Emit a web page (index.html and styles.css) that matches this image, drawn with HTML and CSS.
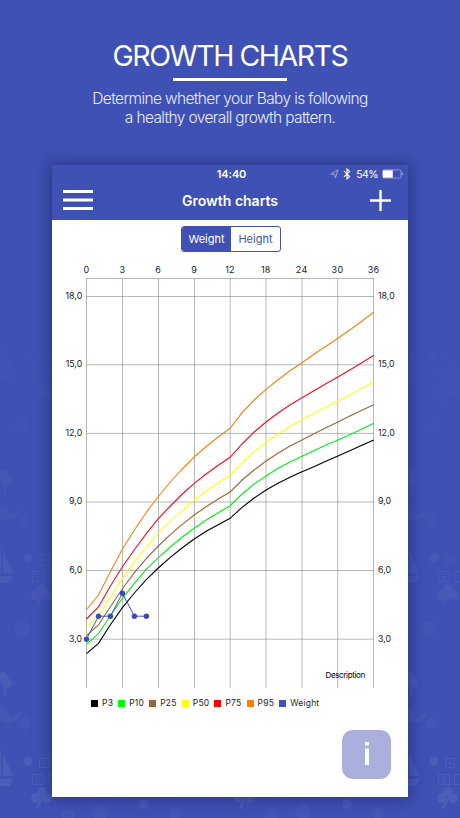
FILE: index.html
```html
<!DOCTYPE html>
<html lang="en">
<head>
<meta charset="utf-8">
<title>Growth charts</title>
<link rel="stylesheet" href="styles.css">
</head>
<body>
<svg class="backdrop" width="460" height="818" viewBox="0 0 460 818" aria-hidden="true">
  <defs>
    <pattern id="toys" width="203" height="203" y="545" patternUnits="userSpaceOnUse">
      <g fill="#fff">
        <path d="M0 3H1V28H0zM3 5 13 28H3zM0 31H13L10 38H0z"/>
        <circle cx="28" cy="13" r="4.500"/>
        <circle cx="42" cy="44" r="5"/><circle cx="36" cy="50" r="5"/><circle cx="47" cy="50" r="5"/><path d="M41 50l2 1-5 10-2-1z"/>
        <circle cx="3" cy="132" r="5"/><circle cx="7" cy="138" r="5"/><path d="M4 138h2v13H4z"/>
        <path d="M0 162q8 2 11 11 4-4 10-5-2 8-11 10-6 1-10-3z" opacity=".6"/>
        <circle cx="22" cy="84" r="8" opacity=".4"/><circle cx="25" cy="178" r="6" opacity=".4"/>
        <circle cx="144" cy="56" r="5" opacity=".8"/><circle cx="175" cy="66" r="6" opacity=".4"/><circle cx="100" cy="64" r="8" opacity=".4"/><circle cx="68" cy="68" r="7" opacity=".4"/>
      </g>
      <g fill="none" stroke="#fff">
        <rect x="39.500" y="10.500" width="9" height="9"/><rect x="32.500" y="26.500" width="11" height="10"/><rect x="48.500" y="26.500" width="11" height="10"/>
        <path d="M42 17l2-4 2 4M36 29h4M36 31.500h4M36 34h4"/>
      </g>
    </pattern>
    <linearGradient id="rise" x1="0" y1="0" x2="0" y2="1">
      <stop offset=".35" stop-color="#fff" stop-opacity="0"/><stop offset=".72" stop-color="#fff" stop-opacity=".05"/><stop offset="1" stop-color="#fff" stop-opacity=".075"/>
    </linearGradient>
    <mask id="fade"><rect width="460" height="818" fill="url(#rise)"/></mask>
  </defs>
  <rect width="460" height="818" fill="url(#toys)" mask="url(#fade)"/>
</svg>
<main class="page">
  <header class="intro">
    <h1 class="title">GROWTH CHARTS</h1>
    <div class="rule"></div>
    <p class="lead">Determine whether your Baby is following<br>a healthy overall growth pattern.</p>
  </header>
  <section class="phone">
    <div class="bar">
      <div class="status">
        <span></span>
        <span class="clock">14:40</span>
        <span class="indicators">
          <svg width="9" height="10" viewBox="0 0 9 10"><path d="M.8 5.100 8 1 5.300 8.800 4.500 5.300z" fill="none" stroke="#aeb7e2" stroke-width=".8"/></svg>
          <svg width="8" height="12" viewBox="0 0 8 12"><path d="M1 3.200 6.600 8.600 4 11V1l2.600 2.500L1 8.800" fill="none" stroke="#fff" stroke-width="1.100"/></svg>
          <span class="percent">54%</span>
          <svg width="22" height="10" viewBox="0 0 22 10"><rect x=".5" y=".9" width="18.500" height="8.200" rx="1.500" fill="none" stroke="#aeb7e2" stroke-width=".7"/><path d="M1 1.300h9.800v7.400H1z" fill="#fff"/><path d="M20 3.500q1.500 1.500 0 3z" fill="#fff"/></svg>
        </span>
      </div>
      <nav class="nav">
        <svg width="30" height="20" viewBox="0 0 30 20"><path d="M0 1.500h30M0 10h30M0 18.500h30" stroke="#fff" stroke-width="3"/></svg>
        <span class="nav-title">Growth charts</span>
        <svg class="add" width="21" height="21" viewBox="0 0 21 21"><path d="M0 10.500h21M10.500 0v21" stroke="#fff" stroke-width="2.400"/></svg>
      </nav>
    </div>
    <div class="tabs"><span class="tab active">Weight</span><span class="tab">Height</span></div>
    <svg class="chart" width="356" height="431" viewBox="52 260 356 431">
      <g class="grid">
        <path d="M86.500 278v410M122.500 278v410M158.500 278v410M194.500 278v410M230.200 278v410M266 278v410M302 278v410M337.700 278v410M373.500 278v410"/>
        <path d="M86 278.500h288M86 296.500h288M86 364.800h288M86 433.400h288M86 502h288M86 570.500h288M86 639.200h288"/>
      </g>
      <g class="months">
        <text x="86.500" y="273">0</text><text x="122.500" y="273">3</text><text x="158.300" y="273">6</text><text x="194.200" y="273">9</text><text x="230" y="273">12</text><text x="265.800" y="273">18</text><text x="301.700" y="273">24</text><text x="337.500" y="273">30</text><text x="373.500" y="273">36</text>
      </g>
      <g class="kilos left">
        <text x="82.200" y="298.600">18,0</text><text x="82.200" y="367.200">15,0</text><text x="82.200" y="435.800">12,0</text><text x="82.200" y="504.300">9,0</text><text x="82.200" y="572.800">6,0</text><text x="82.200" y="641.500">3,0</text>
      </g>
      <g class="kilos">
        <text x="378" y="298.600">18,0</text><text x="378" y="367.200">15,0</text><text x="378" y="435.800">12,0</text><text x="378" y="504.300">9,0</text><text x="378" y="572.800">6,0</text><text x="378" y="641.500">3,0</text>
      </g>
      <g class="curves" id="curves"></g>
      <g class="weight">
        <path d="M86.500 639.200 98.500 616.200H110.400L122.400 593.300 134.400 616.200H146.400"/>
        <circle cx="86.500" cy="639.200" r="2.700"/><circle cx="98.500" cy="616.200" r="2.700"/><circle cx="110.400" cy="616.200" r="2.700"/><circle cx="122.400" cy="593.300" r="2.700"/><circle cx="134.400" cy="616.200" r="2.700"/><circle cx="146.400" cy="616.200" r="2.700"/>
      </g>
      <text class="desc" x="325.500" y="678">Description</text>
    </svg>
    <div class="legend">
      <span class="key p3">P3</span><span class="key p10">P10</span><span class="key p25">P25</span><span class="key p50">P50</span><span class="key p75">P75</span><span class="key p95">P95</span><span class="key own">Weight</span>
    </div>
    <div class="info"><svg width="12" height="24" viewBox="0 0 12 24"><path d="M4 0h4v3.500H4zM4 6.500h4V23H4z" fill="#fff"/></svg></div>
  </section>
</main>
<script src="chart.js"></script>
</body>
</html>
```
FILE: styles.css
```css
* { box-sizing: border-box; }
body {
  margin: 0;
  width: 460px;
  height: 818px;
  overflow: hidden;
  background: #3f51b5;
  font-family: Inter, "Liberation Sans", sans-serif;
}
.backdrop { position: absolute; top: 0; left: 0; z-index: -1; }
.page { display: flex; flex-direction: column; align-items: center; }
.intro {
  height: 165px;
  padding-top: 38px;
  display: flex;
  flex-direction: column;
  align-items: center;
  color: #fff;
  text-align: center;
}
.title { margin: 0; font-size: 28.500px; line-height: 36px; font-weight: 400; letter-spacing: -1.450px; white-space: nowrap; }
.rule { width: 114px; height: 2.500px; margin: 4px 0 8px; background: #fff; }
.lead { margin: 0; font-size: 15.500px; line-height: 19px; font-weight: 300; letter-spacing: -0.630px; white-space: nowrap; color: #e8ebff; }
.phone {
  width: 356px;
  height: 632px;
  background: #fff;
  display: flex;
  flex-direction: column;
  box-shadow: 0 0 14px 2px rgba(20, 25, 90, .5);
}
.bar { height: 54.500px; background: #3f51b5; color: #fff; }
.status { height: 18px; display: grid; grid-template-columns: 1fr auto 1fr; align-items: center; padding: 0 4px 0 7px; font-size: 11px; }
.clock { font-weight: 600; letter-spacing: -.1px; }
.indicators { display: flex; align-items: center; justify-content: flex-end; gap: 4px; }
.percent { font-size: 10.500px; letter-spacing: -.6px; margin-left: 1px; }
.nav { height: 34px; display: flex; align-items: center; justify-content: space-between; padding: 0 17px 0 11px; }
.nav-title { font-size: 14px; font-weight: 600; margin-right: 3px; }
.tabs { width: 100px; height: 26px; margin: 6.500px 0 0 129px; display: flex; border: 1px solid #4353b5; border-radius: 3px; overflow: hidden; }
.tab { flex: 1; text-align: center; font-size: 11px; line-height: 24px; color: #4353b5; }
.tab.active { background: #3f51b5; color: #fff; }
.chart { display: block; margin-top: 8px; flex: none; }
.grid path { fill: none; stroke: #888; stroke-width: .6; }
.months text { font-size: 9px; letter-spacing: .3px; text-anchor: middle; fill: #222; }
.kilos text { font-size: 8.800px; fill: #222; }
.kilos.left text { text-anchor: end; }
.curves polyline { fill: none; stroke-width: 1.100; }
.weight path { fill: none; stroke: #4353b5; stroke-width: 1; }
.weight circle { fill: #3f4bab; }
.desc { font-size: 8px; letter-spacing: -.35px; fill: #000; }
.legend { display: flex; gap: 5px; padding-left: 39px; margin-top: 6px; height: 13px; }
.key { display: flex; align-items: center; gap: 4px; font-size: 8.500px; line-height: 13px; letter-spacing: .2px; color: #222; }
.key + .key { margin-left: .15px; }
.key::before { content: ""; width: 7px; height: 7px; background: currentColor; }
.p3::before { background: #000; }
.p10::before { background: #0f0; }
.p25::before { background: #996633; }
.p50::before { background: #ff0; }
.p75::before { background: #f00; }
.p95::before { background: #ff8000; }
.own::before { background: #4353b5; }
.info { width: 49px; height: 49px; margin: 19.500px 0 0 290px; border-radius: 11px; background: #abafdb; display: flex; align-items: center; justify-content: center; }
```
FILE: chart.js
```js
// Vertical position of each percentile at every step: monthly to 12, then every two months to 36.
const curves = {
  '#000000': [653.7,643.3,624.7,607.7,593,579.7,568,557.3,547.7,539,531.3,524.7,518.3,507.3,498,490,483.3,477.3,471.7,466.7,461.3,456,450.7,445.3,440],
  '#00f010': [644.3,633.7,615.7,598.3,583.3,569.3,557.7,547,537,528.3,520,512.7,505.7,494,484,476,468.3,462,456.3,450.7,445,440,434.7,429,423.3],
  '#996633': [635.7,625,606.7,588.7,572.7,558.7,546,534.7,524.3,515,506.7,499,492,480,470,461,453.3,446,440,433.7,427.7,422,416,410.3,404.7],
  '#ffff10': [627,615.7,596.7,578.3,561.7,547,533.3,521.3,510.3,500,491,482.7,475,462.7,451.7,442.3,433.7,426.7,419.3,413.3,407,401,394.7,388.3,381.7],
  '#ee1020': [619,607,586,566.7,549.7,533.7,518.7,506,494,483.3,474,465.3,457.3,444,432,422,413,405,397.7,390.7,383.7,377,370,362.7,355.3],
  '#f58010': [609.5,595,571.7,549,530,512.3,496.5,482,469,457,446.5,437,428.3,412.7,400,389.3,379.7,370.8,362.7,354.3,346.3,338.3,330,321.3,312]
};
const layer = document.getElementById('curves');
for (const [color, ys] of Object.entries(curves)) {
  const line = document.createElementNS('http://www.w3.org/2000/svg', 'polyline');
  line.setAttribute('points', ys.map((y, i) => `${(86.5 + i * 11.97).toFixed(1)},${y}`).join(' '));
  line.setAttribute('stroke', color);
  layer.appendChild(line);
}
```
